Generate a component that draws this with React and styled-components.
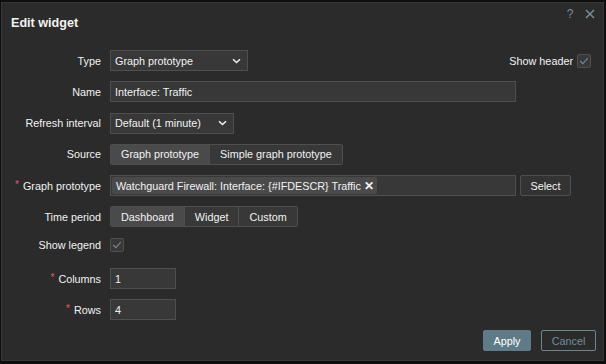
import React from "react";
import styled, { createGlobalStyle } from "styled-components";

const Global = createGlobalStyle`
  html, body { margin: 0; padding: 0; background: #0e0e0e; }
  body { font-family: "Liberation Sans", Arial, sans-serif; font-size: 10.8px; color: #f2f2f2; }
  * { box-sizing: border-box; }
`;

const Dialog = styled.div`
  margin: 2px 0 0 1px;
  width: 603px;
  height: 359px;
  background: #2b2b2b;
  border: 1px solid #383838;
  display: flex;
  flex-direction: column;
`;

const Header = styled.div`
  display: flex;
  justify-content: space-between;
  align-items: flex-start;
  padding: 5px 8px 0 9px;
  height: 47px;
`;

const Title = styled.h4`
  margin: 8px 0 0;
  font-size: 12.6px;
  font-weight: bold;
  line-height: 15px;
  color: #f2f2f2;
`;

const HeaderIcons = styled.div`
  display: flex;
  gap: 10px;
  align-items: center;
  color: #768d99;
  font-size: 12px;
  line-height: 12px;
`;

const IconBtn = styled.span`
  display: flex;
  align-items: center;
  justify-content: center;
  width: 10px;
  height: 12px;
`;

const Form = styled.div`
  display: grid;
  grid-template-columns: 91px 1fr;
  column-gap: 9px;
  row-gap: 10.3px;
  padding: 0 12px 0 8px;
`;

const Label = styled.div`
  display: flex;
  align-items: ${(p) => (p.$top ? "flex-start" : "center")};
  justify-content: flex-end;
  height: ${(p) => p.$h || 21}px;
  white-space: nowrap;
  line-height: ${(p) => (p.$top ? "14px" : "normal")};
`;

const Req = styled.span`
  color: #e45959;
  margin-right: 4px;
  font-size: 10px;
  position: relative;
  top: -1px;
`;

const Field = styled.div`
  display: flex;
  align-items: ${(p) => (p.$top ? "flex-start" : "center")};
  height: ${(p) => p.$h || 21}px;
  gap: ${(p) => p.$gap || 0}px;
`;

const Select = styled.div`
  width: ${(p) => p.$w}px;
  height: 21px;
  background: #383838;
  border: 1px solid #4f4f4f;
  display: flex;
  align-items: center;
  justify-content: space-between;
  padding: 0 6px 0 4px;
`;

const Input = styled.div`
  width: ${(p) => p.$w}px;
  height: 21px;
  background: #383838;
  border: 1px solid #4f4f4f;
  display: flex;
  align-items: center;
  padding: 0 4px;
`;

const Segmented = styled.div`
  display: flex;
  height: 21px;
  border: 1px solid #4f4f4f;
  border-radius: 2px;
  background: #383838;
  overflow: hidden;
`;

const Segment = styled.div`
  display: flex;
  align-items: center;
  padding: 0 ${(p) => p.$px || 10}px;
  background: ${(p) => (p.$active ? "#4a4a4a" : "#383838")};
  border-left: ${(p) => (p.$first ? "none" : "1px solid #4f4f4f")};
`;

const Spacer = styled.div`
  flex: 1;
`;

const CheckLabel = styled.span`
  margin-right: 4px;
`;

const Checkbox = styled.div`
  width: 14px;
  height: 14px;
  background: #383838;
  border: 1px solid #4f4f4f;
  border-radius: 2px;
  display: flex;
  align-items: center;
  justify-content: center;
`;

const Multi = styled.div`
  width: 406px;
  height: 21px;
  background: #383838;
  border: 1px solid #4f4f4f;
  display: flex;
  align-items: center;
  padding: 0 1px;
`;

const Chip = styled.div`
  height: 17px;
  display: flex;
  align-items: center;
  gap: 3px;
  padding: 0 3px 0 4px;
  background: #4a4a4a;
  border-radius: 2px;
`;

const ChipX = styled.span`
  font-weight: bold;
  font-size: 12px;
  line-height: 12px;
`;

const GreyButton = styled.div`
  width: 51px;
  height: 21px;
  display: flex;
  align-items: center;
  justify-content: center;
  background: #333333;
  border: 1px solid #4f4f4f;
  border-radius: 2px;
`;

const Footer = styled.div`
  margin-top: auto;
  display: flex;
  justify-content: flex-end;
  gap: 10px;
  padding: 0 7px 9px 0;
`;

const Button = styled.div`
  height: 21px;
  width: ${(p) => p.$w}px;
  display: flex;
  align-items: center;
  justify-content: center;
  border-radius: 2px;
  border: 1px solid ${(p) => (p.$alt ? "#6d8591" : "#5f7b88")};
  background: ${(p) => (p.$alt ? "transparent" : "#5f7b88")};
  color: ${(p) => (p.$alt ? "#768d99" : "#ffffff")};
`;

const Chevron = () => (
  <svg width="9" height="6" viewBox="0 0 9 6">
    <path d="M1 1.2 L4.5 4.5 L8 1.2" fill="none" stroke="#f2f2f2" strokeWidth="1.5" />
  </svg>
);

const Check = () => (
  <svg width="10" height="8" viewBox="0 0 10 8">
    <path d="M1.2 4 L3.8 6.6 L8.8 1.2" fill="none" stroke="#6f8794" strokeWidth="1.2" />
  </svg>
);

const Close = () => (
  <svg width="10" height="10" viewBox="0 0 10 10">
    <path d="M1 1 L9 9 M9 1 L1 9" stroke="#768d99" strokeWidth="1.6" />
  </svg>
);

export default function App() {
  return (
    <>
      <Global />
      <Dialog>
        <Header>
          <Title>Edit widget</Title>
          <HeaderIcons>
            <IconBtn>?</IconBtn>
            <IconBtn><Close /></IconBtn>
          </HeaderIcons>
        </Header>
        <Form>
          <Label>Type</Label>
          <Field>
            <Select $w={138}>
              <span>Graph prototype</span>
              <Chevron />
            </Select>
            <Spacer />
            <CheckLabel>Show header</CheckLabel>
            <Checkbox><Check /></Checkbox>
          </Field>

          <Label>Name</Label>
          <Field>
            <Input $w={406}>Interface: Traffic</Input>
          </Field>

          <Label>Refresh interval</Label>
          <Field>
            <Select $w={124}>
              <span>Default (1 minute)</span>
              <Chevron />
            </Select>
          </Field>

          <Label>Source</Label>
          <Field>
            <Segmented>
              <Segment $first $active>Graph prototype</Segment>
              <Segment>Simple graph prototype</Segment>
            </Segmented>
          </Field>

          <Label><Req>*</Req>Graph prototype</Label>
          <Field $gap={4}>
            <Multi>
              <Chip>
                <span>Watchguard Firewall: Interface: {"{#IFDESCR}"} Traffic</span>
                <ChipX>✕</ChipX>
              </Chip>
            </Multi>
            <GreyButton>Select</GreyButton>
          </Field>

          <Label>Time period</Label>
          <Field>
            <Segmented>
              <Segment $first $active>Dashboard</Segment>
              <Segment>Widget</Segment>
              <Segment>Custom</Segment>
            </Segmented>
          </Field>

          <Label $top $h={20}>Show legend</Label>
          <Field $top $h={20}>
            <Checkbox><Check /></Checkbox>
          </Field>

          <Label><Req>*</Req>Columns</Label>
          <Field>
            <Input $w={66}>1</Input>
          </Field>

          <Label><Req>*</Req>Rows</Label>
          <Field>
            <Input $w={66}>4</Input>
          </Field>
        </Form>
        <Footer>
          <Button $w={48}>Apply</Button>
          <Button $alt $w={55}>Cancel</Button>
        </Footer>
      </Dialog>
    </>
  );
}
